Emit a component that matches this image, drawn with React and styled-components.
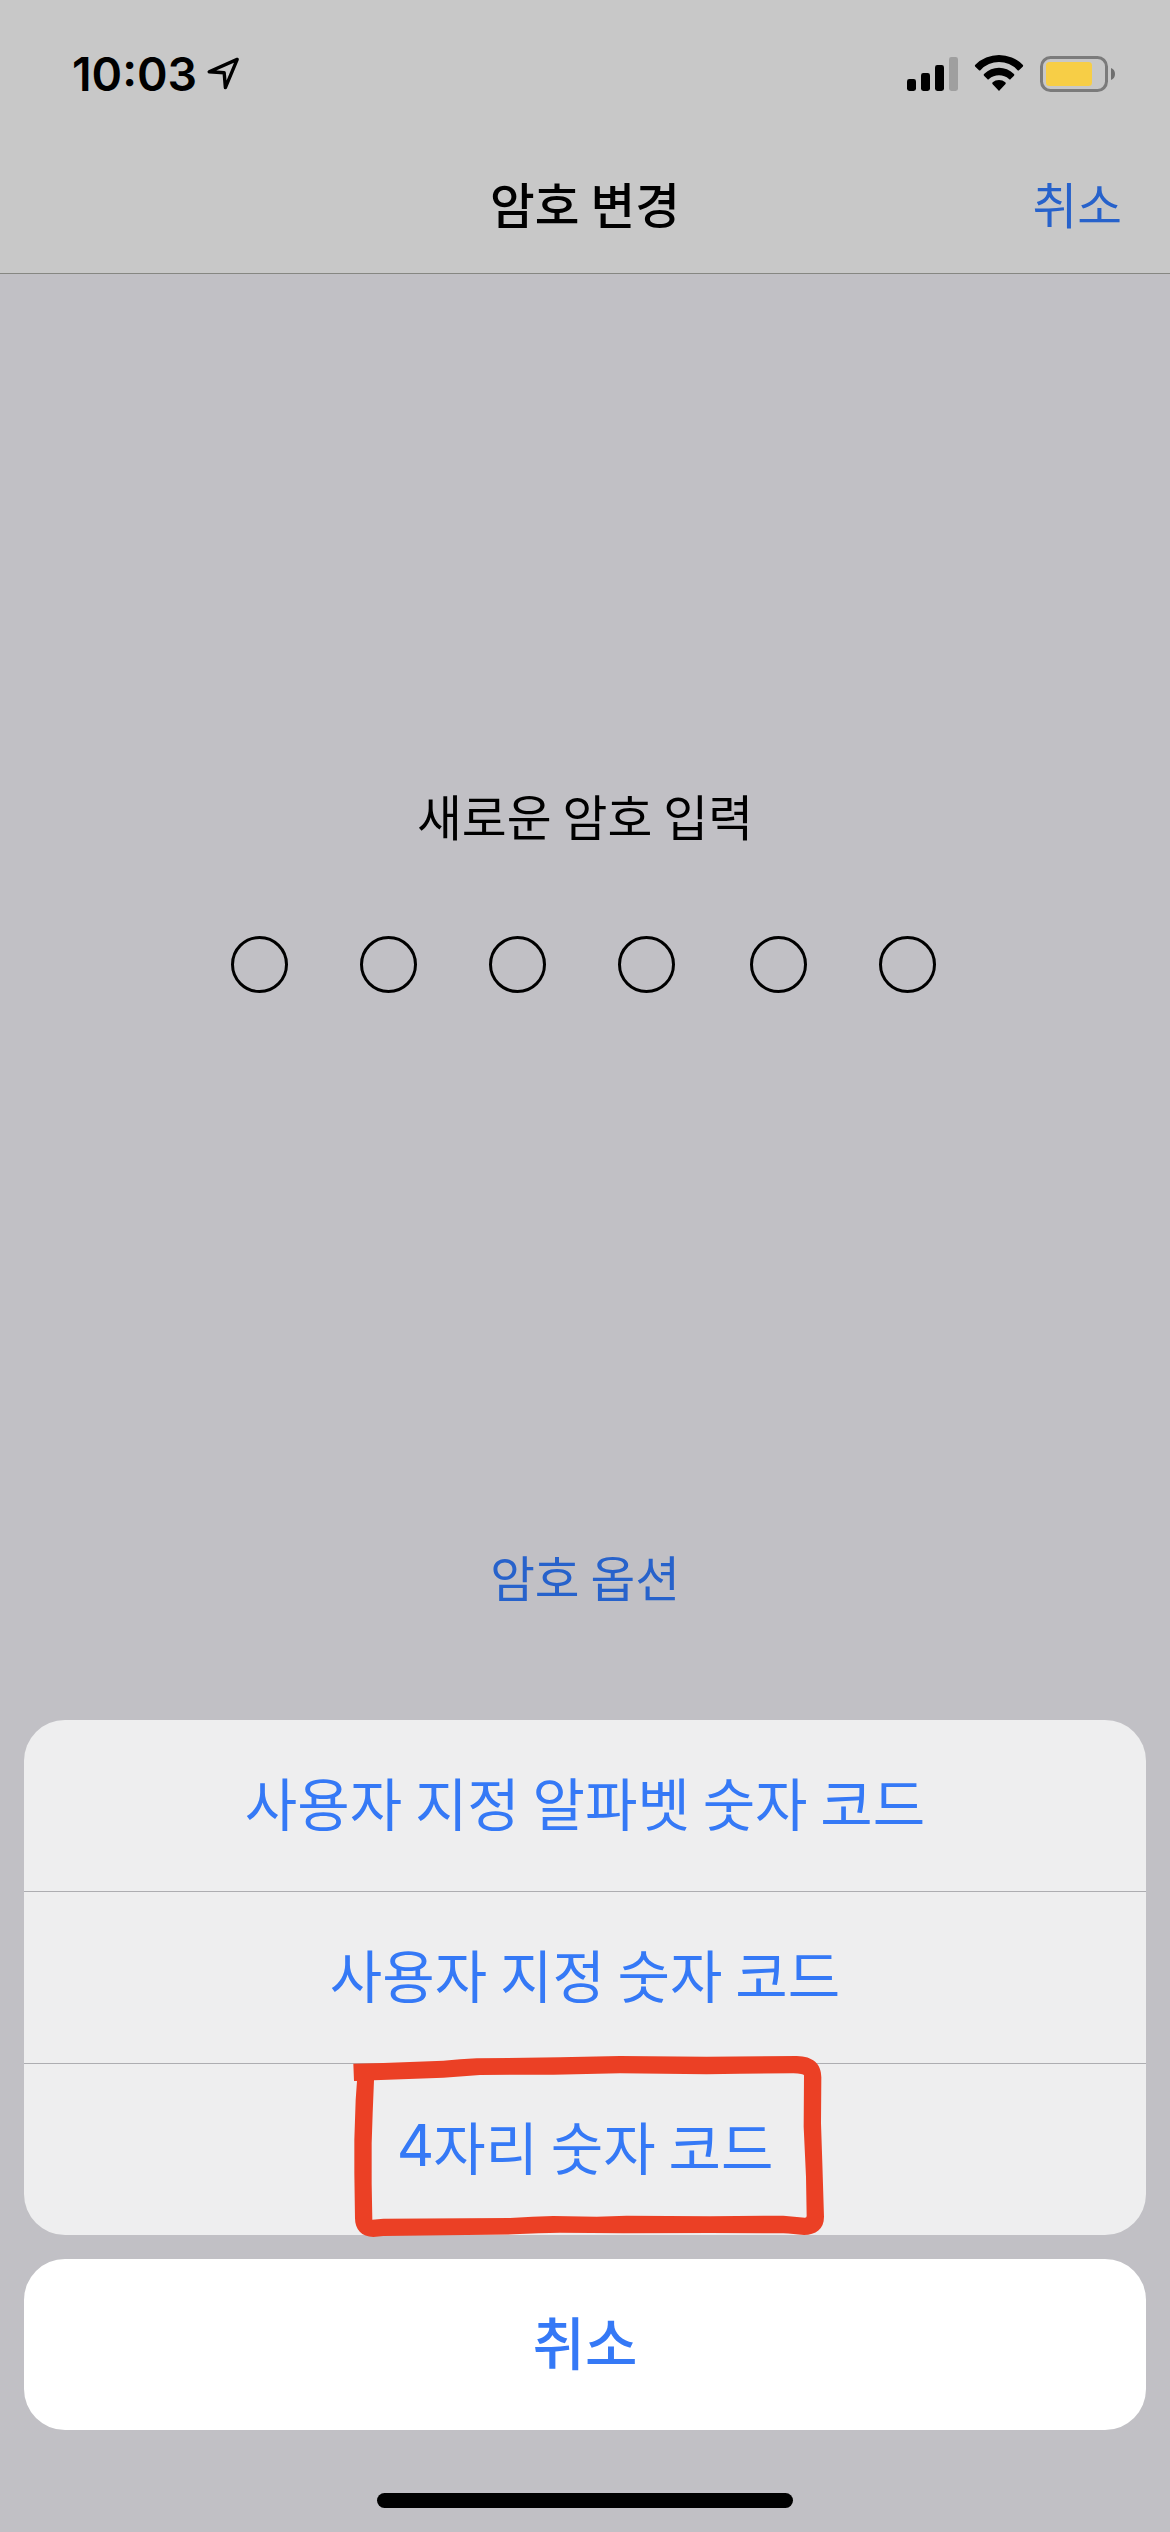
import React from 'react'
import styled, { createGlobalStyle } from 'styled-components'

const sheetOptions = [
    { id: 1, title: '사용자 지정 알파벳 숫자 코드' },
    { id: 2, title: '사용자 지정 숫자 코드' },
    { id: 3, digit: '4', title: '자리 숫자 코드', marked: true },
]

const passcodeLength = 6

function LocationIcon() {
    return (
        <svg width="36" height="40" viewBox="0 0 36 40" fill="none">
            <path
                d="M32.2 5.4 L4.2 17.8 L19.2 18.8 L20.4 33.6 Z"
                stroke="#000"
                strokeWidth="3.4"
                strokeLinejoin="round"
            />
        </svg>
    )
}

function SignalIcon() {
    return (
        <svg width="51" height="40" viewBox="0 0 51 40">
            <rect x="0" y="25" width="9" height="12" rx="2.4" />
            <rect x="14" y="19" width="9" height="18" rx="2.4" />
            <rect x="28" y="11" width="9" height="26" rx="2.4" />
            <rect x="42" y="3" width="9" height="34" rx="2.4" fill="#9f9f9f" />
        </svg>
    )
}

function WifiIcon() {
    return (
        <svg width="50" height="40" viewBox="282 72 150 120">
            <path d="M286 104 A101 101 0 0 1 428 104 Q431 107 428 110 L417 121 Q415 123 412 120 A75 75 0 0 0 302 120 Q299 123 297 121 L286 110 Q283 107 286 104 Z" />
            <path d="M313 131 A63 63 0 0 1 401 131 Q405 134 402 137 L392 147 Q390 150 387 147 A46 46 0 0 0 327 147 Q324 150 322 147 L312 137 Q309 134 313 131 Z" />
            <path d="M338 157 A29 29 0 0 1 376 157 Q379 160 376 163 L359 181 Q357 184 355 181 L338 163 Q335 160 338 157 Z" />
        </svg>
    )
}

function BatteryIcon() {
    return (
        <svg width="75" height="40" viewBox="0 0 75 40">
            <rect x="1.5" y="3.5" width="65" height="33" rx="9" fill="none" stroke="#7b7b7b" strokeWidth="3" />
            <rect x="6" y="8" width="46" height="24" rx="3.5" fill="#f7ce46" />
            <path d="M71 14 Q75 15.6 75 20 Q75 24.4 71 26 Z" fill="#6f6f6f" />
        </svg>
    )
}

function Scribble() {
    return (
        <ScribbleStyled viewBox="0 0 1500 630">
            <path
                fillRule="evenodd"
                d="M40 71 L130 69 L310 62 Q360 57 410 55 L660 52 L840 48 L1100 50 L1370 48 C1420 49 1444 72 1444 112 L1443 250 L1447 370 L1452 530 C1452 568 1427 584 1392 585 C1370 584 1350 581 1330 580 L1110 579 L850 580 L660 578 Q600 579 520 583 L380 585 L130 588 L100 591 C65 591 45 568 45 535 L43 400 L43 300 L47 180 L51 123 L42 123 Z
                M102 121 L98 220 L95 310 L95 430 L97 539 L130 536 L380 535 L510 534 Q580 530 640 528 L770 530 L860 527 L1110 529 L1330 527 L1395 533 Q1400 533 1400 528 L1398 410 L1391 260 L1392 106 Q1390 101 1360 100 L1200 101 L1100 103 L840 100 L640 104 L420 105 L310 113 Z"
            />
        </ScribbleStyled>
    )
}

function App() {
    return (
        <ScreenStyled>
            <GlobalStyle />
            <HeaderStyled>
                <StatusBar>
                    <div className="time">
                        <span>10:03</span>
                        <LocationIcon />
                    </div>
                    <div className="icons">
                        <SignalIcon />
                        <WifiIcon />
                        <BatteryIcon />
                    </div>
                </StatusBar>
                <NavBar>
                    <h1>암호 변경</h1>
                    <LinkButton>취소</LinkButton>
                </NavBar>
            </HeaderStyled>

            <PasscodeStyled>
                <p>새로운 암호 입력</p>
                <Dots>
                    {Array.from({ length: passcodeLength }, (_, i) => (
                        <Dot key={i} />
                    ))}
                </Dots>
                <LinkButton>암호 옵션</LinkButton>
            </PasscodeStyled>

            <SheetStyled>
                <SheetGroup>
                    {sheetOptions.map((item) => (
                        <SheetButton key={item.id}>
                            {item.digit && <Digit>{item.digit}</Digit>}
                            {item.title}
                            {item.marked && <Scribble />}
                        </SheetButton>
                    ))}
                </SheetGroup>
                <SheetGroup $solid>
                    <SheetButton $bold>취소</SheetButton>
                </SheetGroup>
            </SheetStyled>

            <HomeIndicator />
        </ScreenStyled>
    )
}

const GlobalStyle = createGlobalStyle`
    *{
        box-sizing: border-box;
        margin: 0;
        padding: 0;
    }
    body{
        background: #c1c0c5;
        font-family: "Noto Sans CJK KR", sans-serif;
    }
    button{
        font: inherit;
        border: none;
        background: none;
        cursor: pointer;
    }
    svg{
        display: block;
    }
`;

const ScreenStyled = styled.div`
    width: 1170px;
    height: 2532px;
    display: flex;
    flex-direction: column;
    overflow: hidden;
    background: #c1c0c5;
`;

const HeaderStyled = styled.header`
    background: #c8c8c8;
    border-bottom: 1px solid #868782;
`;

const StatusBar = styled.div`
    height: 132px;
    padding: 54px 55px 0 72px;
    display: flex;
    justify-content: space-between;
    .time{
        display: flex;
        gap: 8px;
        height: 40px;
        font-family: Inter, sans-serif;
        font-size: 46.4px;
        font-weight: 600;
        line-height: 40px;
    }
    .icons{
        display: flex;
        gap: 16px;
    }
`;

const NavBar = styled.nav`
    height: 141px;
    padding: 0 48px;
    display: grid;
    grid-template-columns: 1fr auto 1fr;
    align-items: center;
    h1{
        grid-column: 2;
        font-size: 48.6px;
        font-weight: 500;
        line-height: 60px;
    }
    button{
        justify-self: end;
    }
`;

const LinkButton = styled.button`
    font-size: 48.6px;
    line-height: 60px;
    color: #2762cb;
`;

const PasscodeStyled = styled.main`
    height: 1446px;
    padding-top: 511px;
    display: flex;
    flex-direction: column;
    align-items: center;
    p{
        font-size: 48.8px;
        line-height: 60px;
        color: #000;
    }
    ${LinkButton}{
        margin-top: 553px;
    }
`;

const Dots = styled.div`
    display: flex;
    gap: 72px;
    margin-top: 91px;
    padding-right: 3px;
`;

const Dot = styled.span`
    width: 57px;
    height: 57px;
    border: 3px solid #000;
    border-radius: 50%;
    &:nth-child(5){
        margin-left: 3px;
    }
`;

const SheetStyled = styled.section`
    display: flex;
    flex-direction: column;
    gap: 24px;
    padding: 0 24px;
`;

const SheetGroup = styled.div`
    display: flex;
    flex-direction: column;
    border-radius: 41px;
    background: ${({ $solid }) => ($solid ? '#fff' : '#eeeeef')};
`;

const SheetButton = styled.button`
    position: relative;
    height: 171px;
    padding-bottom: 10px;
    display: flex;
    align-items: center;
    justify-content: center;
    font-size: 57px;
    font-weight: ${({ $bold }) => ($bold ? 500 : 400)};
    line-height: 80px;
    color: #3579f6;
    & + &{
        height: 172px;
        border-top: 1px solid #adadb1;
    }
`;

const Digit = styled.span`
    margin-right: -1px;
    font-family: Inter, sans-serif;
    font-size: 58px;
`;

/* hand-drawn frame, spills over the row on every side but the text */
const ScribbleStyled = styled.svg`
    position: absolute;
    left: 316px;
    top: -24px;
    width: 500px;
    height: 210px;
    fill: #eb4025;
    pointer-events: none;
`;

const HomeIndicator = styled.div`
    width: 416px;
    height: 15px;
    margin: 63px auto 0;
    border-radius: 8px;
    background: #000;
`;

export default App
